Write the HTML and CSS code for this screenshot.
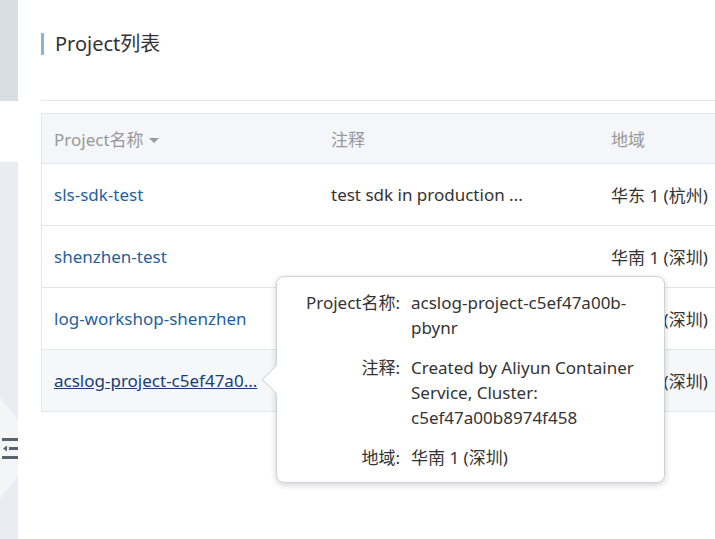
FILE: index.html
```html
<!DOCTYPE html>
<html lang="zh-CN">
<head>
<meta charset="utf-8">
<title>Project列表</title>
<link rel="stylesheet" href="styles.css">
</head>
<body>
<div class="layout">
  <aside class="sidebar">
    <div class="side-top"></div>
    <div class="side-gap"></div>
    <div class="side-bottom">
      <div class="side-tab">
        <svg class="collapse-icon" width="16" height="24" viewBox="0 0 16 24">
          <rect x="0" y="2" width="16" height="3" fill="#59636e"/>
          <rect x="7" y="11" width="9" height="3" fill="#59636e"/>
          <path d="M1 12.5 L5 9.5 L5 15.5 Z" fill="#59636e"/>
          <rect x="0" y="20" width="16" height="3" fill="#59636e"/>
        </svg>
      </div>
    </div>
  </aside>
  <main class="main">
    <h1 class="title">Project列表</h1>
    <div class="divider"></div>
    <div class="table">
      <div class="row head">
        <div class="cell c1">Project名称<span class="caret"></span></div>
        <div class="cell c2">注释</div>
        <div class="cell c3">地域</div>
      </div>
      <div class="row">
        <div class="cell c1"><a class="link">sls-sdk-test</a></div>
        <div class="cell c2">test sdk in production ...</div>
        <div class="cell c3">华东 1 (杭州)</div>
      </div>
      <div class="row">
        <div class="cell c1"><a class="link">shenzhen-test</a></div>
        <div class="cell c2"></div>
        <div class="cell c3">华南 1 (深圳)</div>
      </div>
      <div class="row">
        <div class="cell c1"><a class="link">log-workshop-shenzhen</a></div>
        <div class="cell c2"></div>
        <div class="cell c3">华南 1 (深圳)</div>
      </div>
      <div class="row hover">
        <div class="cell c1"><a class="link active">acslog-project-c5ef47a0...</a></div>
        <div class="cell c2"></div>
        <div class="cell c3">华南 1 (深圳)</div>
      </div>
    </div>
  </main>
</div>
<div class="tooltip">
  <div class="tip-grid">
    <div class="tip-label">Project名称:</div>
    <div class="tip-value">acslog-project-c5ef47a00b-pbynr</div>
    <div class="tip-label">注释:</div>
    <div class="tip-value">Created by Aliyun Container Service, Cluster: c5ef47a00b8974f458</div>
    <div class="tip-label">地域:</div>
    <div class="tip-value">华南 1 (深圳)</div>
  </div>
</div>
</body>
</html>
```
FILE: styles.css
```css
html, body {
  margin: 0;
  padding: 0;
  background: #ffffff;
  font-family: "Noto Sans", "Noto Sans CJK SC", sans-serif;
  color: #333333;
  width: 715px;
  height: 539px;
  overflow: hidden;
}

.layout {
  display: flex;
  height: 539px;
}

.sidebar {
  width: 18px;
  flex: none;
  display: flex;
  flex-direction: column;
}

.side-top {
  height: 101px;
  background: #d9dee3;
}

.side-gap {
  height: 61px;
  background: #ffffff;
}

.side-bottom {
  flex: 1;
  background: #e9ecf0;
  padding-top: 236px;
}

.side-tab {
  height: 100px;
  background: #f4f5f7;
  clip-path: polygon(0 0, 100% 22%, 100% 78%, 0 100%);
  display: flex;
  align-items: center;
  justify-content: flex-end;
}

.collapse-icon {
  display: block;
}

.main {
  flex: 1;
  padding-left: 23px;
  overflow: hidden;
}

.title {
  margin: 33px 0 0 0;
  height: 22px;
  border-left: 3px solid #8db4cf;
  padding-left: 11px;
  font-size: 20px;
  font-weight: normal;
  line-height: 22px;
  color: #333333;
}

.divider {
  margin-top: 45px;
  height: 1px;
  background: #e4e6e9;
  width: 800px;
}

.table {
  margin-top: 12px;
  width: 800px;
  border: 1px solid #e3e6ea;
  border-right: none;
  font-size: 17px;
}

.row {
  display: flex;
  height: 61px;
  align-items: center;
  border-top: 1px solid #e3e6ea;
  background: #ffffff;
}

.row.head {
  height: 49px;
  border-top: none;
  background: #f4f6f9;
  color: #999999;
}

.row.hover {
  background: #f6f7f9;
}

.cell {
  padding-left: 12px;
  white-space: nowrap;
}

.c1 { width: 265px; }
.c2 { width: 268px; }
.c3 { flex: 1; }

.caret {
  display: inline-block;
  width: 0;
  height: 0;
  margin-left: 5px;
  vertical-align: 3px;
  border-left: 5px solid transparent;
  border-right: 5px solid transparent;
  border-top: 5px solid #999999;
}

.link {
  color: #1f5f9e;
  text-decoration: none;
}

.link.active {
  color: #173d78;
  text-decoration: underline;
}

.tooltip {
  position: absolute;
  left: 276px;
  top: 276px;
  width: 389px;
  background: #ffffff;
  border: 1px solid #cfd2d6;
  border-radius: 8px;
  box-shadow: 0 2px 6px rgba(0, 0, 0, 0.18);
  padding: 13px 20px 12px 20px;
  font-size: 17px;
  line-height: 25px;
  color: #333333;
  box-sizing: border-box;
}

.tooltip::before {
  content: "";
  position: absolute;
  left: -11px;
  top: 92px;
  width: 20px;
  height: 20px;
  background: #ffffff;
  border-left: 1px solid #cfd2d6;
  border-bottom: 1px solid #cfd2d6;
  transform: rotate(45deg);
}

.tip-grid {
  position: relative;
  display: grid;
  grid-template-columns: 103px 232px;
  column-gap: 11px;
  row-gap: 15px;
}

.tip-label {
  text-align: right;
  white-space: nowrap;
}
```
